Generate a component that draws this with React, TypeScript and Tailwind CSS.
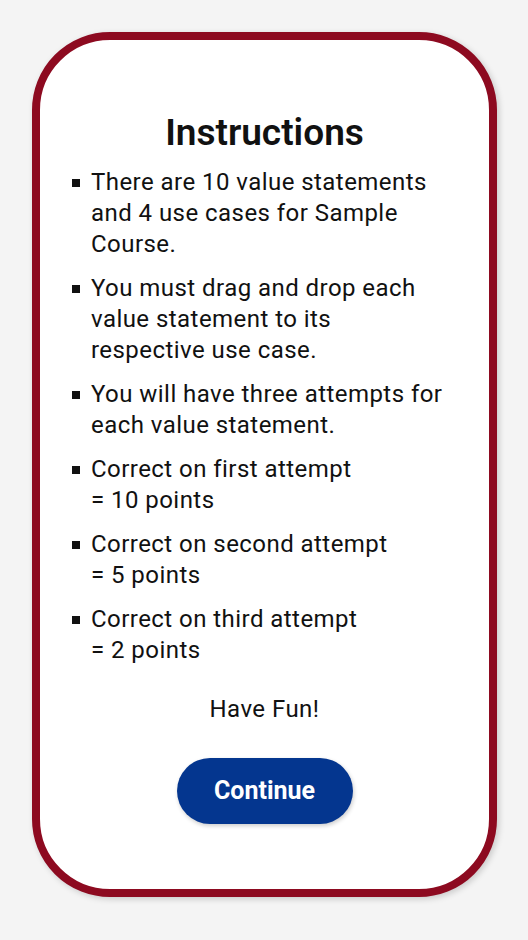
const items: React.ReactNode[] = [
  <>There are 10 value statements<br />and 4 use cases for Sample<br />Course.</>,
  <>You must drag and drop each<br />value statement to its<br />respective use case.</>,
  <>You will have three attempts for<br />each value statement.</>,
  <>Correct on first attempt<br />= 10 points</>,
  <>Correct on second attempt<br />= 5 points</>,
  <>Correct on third attempt<br />= 2 points</>,
];

export default function App() {
  return (
    <div className="min-h-screen bg-[#f4f4f4] pt-8 pl-8 font-['Roboto',sans-serif] text-[#111]">
      <div className="w-[465px] h-[865px] rounded-[78px] border-8 border-[#8d0a20] bg-white shadow-[2px_2px_6px_rgba(0,0,0,0.18)] flex flex-col items-center pt-[72px]">
        <h1 className="text-[37px] leading-[42px] font-semibold">Instructions</h1>

        <ul className="self-stretch pl-8 pr-4 mt-[13px] flex flex-col gap-[13px]">
          {items.map((text, i) => (
            <li key={i} className="flex items-start text-[24px] leading-[31px] tracking-[0.45px]">
              <span className="w-2 h-2 bg-[#111] mt-[12px] mr-[11px] shrink-0" />
              <span className="whitespace-nowrap">{text}</span>
            </li>
          ))}
        </ul>

        <p className="mt-[28px] text-[24px] leading-[31px] tracking-[0.45px]">Have Fun!</p>

        <button className="mt-[33px] w-[176px] h-[66px] rounded-full bg-[#04368f] text-white text-[25px] font-bold shadow-[1px_2px_4px_rgba(0,0,0,0.2)]">
          Continue
        </button>
      </div>
    </div>
  );
}
